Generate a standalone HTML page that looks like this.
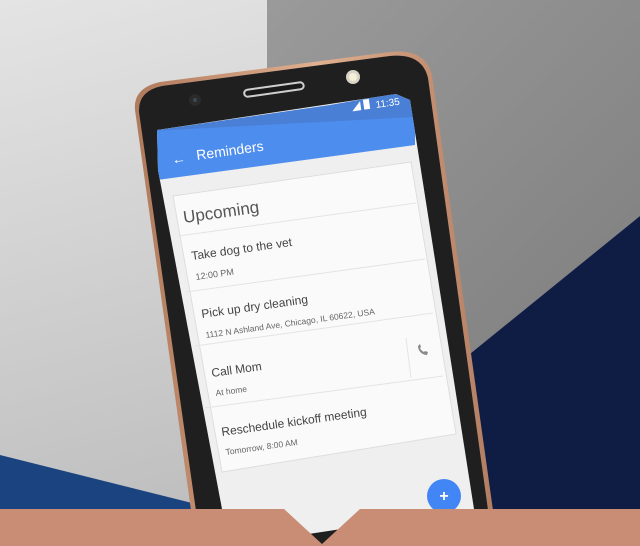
<!DOCTYPE html>
<html><head><meta charset="utf-8"><style>
html,body{margin:0;padding:0;width:640px;height:546px;overflow:hidden}
svg{display:block}
text{font-family:"Liberation Sans",sans-serif}
</style></head><body>
<svg width="640" height="546" viewBox="0 0 640 546" xmlns="http://www.w3.org/2000/svg">
<defs>
<linearGradient id="lg" x1="0" y1="0" x2="0.3" y2="1"><stop offset="0" stop-color="#e4e4e4"/><stop offset="1" stop-color="#bcbcbc"/></linearGradient>
<linearGradient id="gg" x1="0" y1="0" x2="1" y2="1"><stop offset="0" stop-color="#9a9a9a"/><stop offset="1" stop-color="#7e7e7e"/></linearGradient>
<linearGradient id="rim" x1="0" y1="0" x2="1" y2="0"><stop offset="0" stop-color="#b07a5c"/><stop offset="0.5" stop-color="#e0b090"/><stop offset="1" stop-color="#b27c60"/></linearGradient>
<clipPath id="scr"><polygon points="157,130 396,94 410,100 474,509 229,546 222,509 158,170"/></clipPath>
</defs>
<rect width="640" height="546" fill="url(#lg)"/>
<polygon points="267,0 640,0 640,216 460,362 420,380 300,200 267,80" fill="url(#gg)"/>
<polygon points="460,362 640,216 640,546 440,546" fill="#0f1c44"/>
<polygon points="0,455 200,505 200,546 0,546" fill="#1b4380"/>
<!-- phone body -->
<path d="M135,110 Q133,88 160,82 L390,52 Q425,48 432,75 L498,546 L196,546 Z" fill="url(#rim)"/>
<path d="M139,112 Q138,91 162,86 L390,56 Q422,53 428,78 L493,546 L201,546 Z" fill="#1f1f1f"/>
<!-- speaker, camera, flash -->
<g transform="rotate(-8 274 90)"><rect x="243" y="85" width="62" height="9" rx="4.5" fill="#cfcfcf"/><rect x="245" y="87" width="58" height="5" rx="2.5" fill="#1a1a1a"/></g>
<circle cx="195" cy="100" r="6" fill="#2a2a2a"/><circle cx="195" cy="100" r="2" fill="#3b4a55"/>
<circle cx="353" cy="77" r="7" fill="#d8d4c8"/><circle cx="353" cy="77" r="4" fill="#f5f0d8"/>
<!-- screen -->
<g clip-path="url(#scr)">
<rect x="150" y="80" width="340" height="470" fill="#efefef"/>
<polygon points="150,131 330,105 415,90 415,118 150,133" fill="#4a7fd6"/>
<polygon points="150,131 415,117 415,145 150,181" fill="#4d8dee"/>
<!-- card -->
<polygon points="173,196 411,162 456,434 222,472" fill="#fafafa" stroke="#dedede" stroke-width="1"/>
<g stroke="#e4e4e4" stroke-width="1">
<line x1="179" y1="236" x2="416" y2="203"/>
<line x1="186" y1="292" x2="425" y2="259"/>
<line x1="195" y1="346" x2="433" y2="313"/>
<line x1="205" y1="408" x2="443" y2="376"/>
<line x1="406" y1="338" x2="411" y2="378"/>
</g>
<circle cx="444" cy="496" r="17" fill="#4285f4"/>
<text x="444" y="501" font-size="16" font-weight="bold" fill="#fff" text-anchor="middle">+</text>
</g>
<!-- status -->
<g transform="rotate(-8 376 107)">
<polygon points="352,108 361,99 361,108" fill="#fff"/>
<rect x="364" y="98" width="6" height="10" fill="#fff"/>
<text x="376" y="108" font-size="10" fill="#fff">11:35</text>
</g>
<g transform="rotate(-8 197 160)">
<text x="172" y="161" font-size="14" fill="#fff">←</text>
<text x="197" y="160" font-size="14" fill="#fff">Reminders</text>
</g>
<text transform="translate(184,223) rotate(-8)" font-size="17" fill="#555">Upcoming</text>
<text transform="translate(192,260) rotate(-8)" font-size="12" fill="#444">Take dog to the vet</text>
<text transform="translate(196,280) rotate(-8)" font-size="9" fill="#666">12:00 PM</text>
<text transform="translate(202,318) rotate(-8)" font-size="12" fill="#444">Pick up dry cleaning</text>
<text transform="translate(206,338) rotate(-8)" font-size="8.5" fill="#666">1112 N Ashland Ave, Chicago, IL 60622, USA</text>
<text transform="translate(212,377) rotate(-8)" font-size="12" fill="#444">Call Mom</text>
<text transform="translate(216,396) rotate(-8)" font-size="8.5" fill="#666">At home</text>
<text transform="translate(222,436) rotate(-8)" font-size="12" fill="#444">Reschedule kickoff meeting</text>
<text transform="translate(226,455) rotate(-8)" font-size="8.5" fill="#666">Tomorrow, 8:00 AM</text>
<path d="M418,346 c0,5 4,9 9,9 l1,-3 -3,-1 -1,1 c-2,-1 -3,-2 -4,-4 l1,-1 -1,-3 z" fill="#8a8a8a"/>
<!-- bottom band -->
<polygon points="0,509 284,509 322,544 360,509 640,509 640,546 0,546" fill="#c98c74"/>
</svg>
</body></html>
